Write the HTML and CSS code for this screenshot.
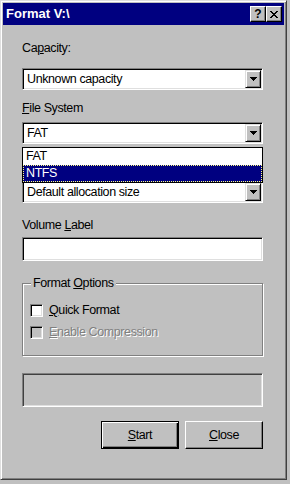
FILE: index.html
```html
<!DOCTYPE html>
<html lang="en">
<head>
    <meta charset="UTF-8">
    <meta name="viewport" content="width=device-width, initial-scale=1.0">
    <title>Format V:\</title>
    <link rel="stylesheet" href="styles.css">
</head>
<body>
    <div class="window">
        <div class="titlebar">
            <span class="title">Format V:\</span>
            <div class="caption-buttons">
                <span class="cap-btn help">?</span>
                <span class="cap-btn">
                    <svg width="8" height="7" viewBox="0 0 8 7"><path d="M0 0h2v1H0zM6 0h2v1H6zM1 1h2v1H1zM5 1h2v1H5zM2 2h4v1H2zM3 3h2v1H3zM2 4h4v1H2zM1 5h2v1H1zM5 5h2v1H5zM0 6h2v1H0zM6 6h2v1H6z"/></svg>
                </span>
            </div>
        </div>

        <div class="content">
            <div class="label lbl-capacity">Ca<u>p</u>acity:</div>
            <div class="combo combo-capacity">
                <span class="combo-text">Unknown capacity</span>
                <span class="drop-btn"><svg width="7" height="4" viewBox="0 0 7 4"><path d="M0 0h7v1H0zM1 1h5v1H1zM2 2h3v1H2zM3 3h1v1H3z"/></svg></span>
            </div>

            <div class="label lbl-fs"><u>F</u>ile System</div>
            <div class="combo-wrap">
                <div class="combo combo-fs">
                    <span class="combo-text">FAT</span>
                    <span class="drop-btn"><svg width="7" height="4" viewBox="0 0 7 4"><path d="M0 0h7v1H0zM1 1h5v1H1zM2 2h3v1H2zM3 3h1v1H3z"/></svg></span>
                </div>
                <ul class="droplist">
                    <li>FAT</li>
                    <li class="selected">NTFS</li>
                </ul>
            </div>

            <!-- allocation label sits under the open list -->
            <div class="label lbl-alloc"></div>
            <div class="combo combo-alloc">
                <span class="combo-text">Default allocation size</span>
                <span class="drop-btn"><svg width="7" height="4" viewBox="0 0 7 4"><path d="M0 0h7v1H0zM1 1h5v1H1zM2 2h3v1H2zM3 3h1v1H3z"/></svg></span>
            </div>

            <div class="label lbl-volume">Volume <u>L</u>abel</div>
            <div class="textbox"></div>

            <div class="group">
                <span class="legend">Format <u>O</u>ptions</span>
                <div class="check-row">
                    <span class="checkbox"></span>
                    <span><u>Q</u>uick Format</span>
                </div>
                <div class="check-row disabled">
                    <span class="checkbox"></span>
                    <span><u>E</u>nable Compression</span>
                </div>
            </div>

            <div class="status"></div>

            <div class="buttons">
                <button type="button" class="btn default"><u>S</u>tart</button>
                <button type="button" class="btn"><u>C</u>lose</button>
            </div>
        </div>
    </div>
</body>
</html>
```

FILE: styles.css
```css
body {
    margin: 0;
    background: #c0c0c0;
    font-family: "Liberation Sans", Arial, sans-serif;
    font-size: 12.5px;
    letter-spacing: -0.4px;
    line-height: 16px;
    color: #000;
}
u {
    text-decoration: underline;
    text-underline-offset: 1px;
}
.window {
    width: 287px;
    height: 480px;
    box-sizing: border-box;
    padding: 2px;
    background: #c0c0c0;
    border: 1px solid;
    border-color: #dfdfdf #404040 #404040 #dfdfdf;
    box-shadow: inset 1px 1px #fff, inset -1px -1px #808080;
}
.titlebar {
    height: 22px;
    background: #000080;
    display: flex;
    align-items: center;
    justify-content: space-between;
    padding: 0 2px 0 3px;
}
.title {
    color: #fff;
    font-weight: bold;
    font-size: 13px;
    letter-spacing: 0;
}
.caption-buttons {
    display: flex;
}
.cap-btn {
    width: 16px;
    height: 16px;
    box-sizing: border-box;
    background: #c0c0c0;
    border: 1px solid;
    border-color: #fff #000 #000 #fff;
    box-shadow: inset -1px -1px #808080;
    display: flex;
    align-items: center;
    justify-content: center;
}
.cap-btn.help {
    font-weight: bold;
    font-size: 12px;
    line-height: 12px;
    letter-spacing: 0;
}
.content {
    padding: 0 21px 0 19px;
}
.label {
    height: 16px;
}
.lbl-capacity { margin-top: 15px; }
.lbl-fs { margin-top: 10px; }
.lbl-alloc { margin-top: 10px; }
.lbl-volume { margin-top: 14px; }

.combo,
.textbox {
    height: 22px;
    box-sizing: border-box;
    background: #fff;
    border: 1px solid;
    border-color: #808080 #fff #fff #808080;
    box-shadow: inset 1px 1px #000, inset -1px -1px #dfdfdf;
    display: flex;
    align-items: center;
    padding: 1px;
}
.combo-capacity { margin-top: 12px; }
.combo-wrap {
    position: relative;
    margin-top: 6px;
}
.combo-alloc { margin-top: 11px; }
.combo-text {
    flex: 1;
    padding-left: 3px;
}
.drop-btn {
    width: 16px;
    height: 18px;
    box-sizing: border-box;
    background: #c0c0c0;
    border: 1px solid;
    border-color: #dfdfdf #000 #000 #dfdfdf;
    box-shadow: inset 1px 1px #fff, inset -1px -1px #808080;
    display: flex;
    align-items: center;
    justify-content: center;
}
.droplist {
    position: absolute;
    left: 0;
    right: 0;
    top: 25px;
    z-index: 2;
    margin: 0;
    padding: 0;
    list-style: none;
    background: #fff;
    border: 1px solid #000;
}
.droplist li {
    height: 17px;
    padding-left: 3px;
}
.droplist li.selected {
    background: #000080;
    color: #fff;
    outline: 1px dotted #ffff80;
    outline-offset: -1px;
}
.textbox {
    height: 24px;
    margin-top: 4px;
}
.group {
    position: relative;
    margin-top: 22px;
    height: 73px;
    box-sizing: border-box;
    border: 1px solid #808080;
    box-shadow: inset 1px 1px #fff, 1px 1px #fff;
    padding: 18px 7px 0;
}
.legend {
    position: absolute;
    top: -9px;
    left: 8px;
    padding: 0 2px;
    background: #c0c0c0;
}
.check-row {
    display: flex;
    align-items: center;
    gap: 6px;
    height: 16px;
    margin-bottom: 6px;
}
.checkbox {
    width: 13px;
    height: 13px;
    box-sizing: border-box;
    background: #fff;
    border: 1px solid;
    border-color: #808080 #fff #fff #808080;
    box-shadow: inset 1px 1px #000, inset -1px -1px #dfdfdf;
}
.check-row.disabled {
    color: #808080;
    text-shadow: 1px 1px #fff;
}
.check-row.disabled .checkbox {
    background: #c0c0c0;
}
.status {
    margin-top: 17px;
    height: 34px;
    box-sizing: border-box;
    border: 1px solid;
    border-color: #808080 #fff #fff #808080;
    box-shadow: inset 1px 1px #404040, inset -1px -1px #dfdfdf;
}
.buttons {
    display: flex;
    justify-content: flex-end;
    gap: 6px;
    margin-top: 14px;
}
.btn {
    width: 78px;
    height: 28px;
    box-sizing: border-box;
    padding: 0;
    font: inherit;
    letter-spacing: inherit;
    color: #000;
    background: #c0c0c0;
    border: 1px solid;
    border-color: #fff #000 #000 #fff;
    box-shadow: inset -1px -1px #808080;
}
.btn.default {
    border-color: #000;
    box-shadow: inset 1px 1px #fff, inset -1px -1px #000, inset -2px -2px #808080;
}
```
